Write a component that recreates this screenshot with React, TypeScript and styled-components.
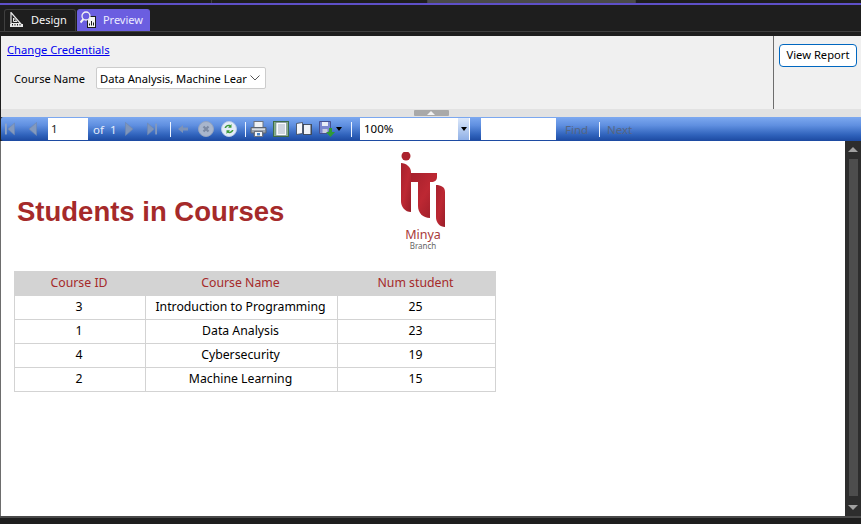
import React from "react"
import styled, { createGlobalStyle } from "styled-components"

const GlobalStyle = createGlobalStyle`
  html, body {
    margin: 0;
    padding: 0;
    height: 100%;
    background: #1e1e1e;
    overflow: hidden;
  }
  body, input, select, button {
    font-family: "Noto Sans", "Open Sans", sans-serif;
  }
`

const rows = [
  { id: 3, name: "Introduction to Programming", num: 25 },
  { id: 1, name: "Data Analysis", num: 23 },
  { id: 4, name: "Cybersecurity", num: 19 },
  { id: 2, name: "Machine Learning", num: 15 },
]

const FirstIcon = () => (
  <svg width="11" height="14" viewBox="0 0 11 14">
    <rect x="0" y="1" width="2" height="12" fill="#8fa3c4" />
    <path d="M10.500 0.500V13.500L3 7Z" fill="#8399bd" stroke="#6f86ad" strokeWidth="0.600" />
  </svg>
)
const PrevIcon = () => (
  <svg width="9" height="14" viewBox="0 0 9 14">
    <path d="M8.500 0.500V13.500L1 7Z" fill="#8399bd" stroke="#6f86ad" strokeWidth="0.600" />
  </svg>
)
const NextIcon = () => (
  <svg width="9" height="14" viewBox="0 0 9 14">
    <path d="M0.500 0.500V13.500L8 7Z" fill="#7f95ba" stroke="#6f86ad" strokeWidth="0.600" />
  </svg>
)
const LastIcon = () => (
  <svg width="11" height="14" viewBox="0 0 11 14">
    <path d="M0.500 0.500V13.500L8 7Z" fill="#7f95ba" stroke="#6f86ad" strokeWidth="0.600" />
    <rect x="9" y="1" width="2" height="12" fill="#8399bd" />
  </svg>
)
const BackIcon = () => (
  <svg width="10" height="10" viewBox="0 0 10 10">
    <path d="M0 5L5 1V3.500H10V6.500H5V9Z" fill="#7d93b8" />
  </svg>
)
const StopIcon = () => (
  <svg width="16" height="16" viewBox="0 0 16 16">
    <circle cx="8" cy="8" r="7.500" fill="#a9b6cc" stroke="#93a3bf" />
    <path d="M5.500 5.500L10.500 10.500M10.500 5.500L5.500 10.500" stroke="#7c8aa3" strokeWidth="2.200" />
  </svg>
)
const RefreshIcon = () => (
  <svg width="16" height="16" viewBox="0 0 16 16">
    <circle cx="8" cy="8" r="7.500" fill="#e4ecf8" stroke="#b9cbe6" />
    <path d="M3.500 7C4 4.500 7 3 9.500 4.200L10.500 3V6.800H7L8.300 5.500C7 5 5.500 5.700 5.200 7Z" fill="#3c9a3a" />
    <path d="M12.500 9C12 11.500 9 13 6.500 11.800L5.500 13V9.200H9L7.700 10.500C9 11 10.500 10.300 10.800 9Z" fill="#3c9a3a" />
  </svg>
)
const PrintIcon = () => (
  <svg width="17" height="16" viewBox="0 0 17 16">
    <rect x="4" y="0.500" width="9" height="6" fill="#eef1f5" stroke="#6d7480" />
    <path d="M1 6.500H16V12H13V15H4V12H1Z" fill="#9aa3ae" stroke="#5c6470" />
    <rect x="2" y="7.500" width="13" height="1.500" fill="#d7dce2" />
    <rect x="4.500" y="10.500" width="8" height="5" fill="#f6f8fb" stroke="#6d7480" />
    <rect x="7" y="12" width="3" height="2.500" fill="#4a86c8" />
  </svg>
)
const PageIcon = () => (
  <svg width="16" height="16" viewBox="0 0 16 16">
    <rect x="0.500" y="0.500" width="15" height="15" fill="#86b088" stroke="#3f6a48" />
    <rect x="3" y="1.500" width="10.500" height="13" fill="#fafbfd" stroke="#5e6f86" strokeWidth="0.500" />
    <path d="M5 4H12M5 6H12M5 8H12M5 10H12M5 12H12" stroke="#8090a8" strokeWidth="0.700" />
  </svg>
)
const BookIcon = () => (
  <svg width="16" height="14" viewBox="0 0 16 14">
    <path d="M0.500 1.500L6.500 0.500V11.500L0.500 12.500Z" fill="#f5f7fb" stroke="#3a4250" strokeWidth="0.800" />
    <rect x="7.500" y="2.500" width="8" height="10" fill="#eef2f8" stroke="#2f3744" strokeWidth="0.800" />
    <rect x="14.500" y="3" width="1" height="9.500" fill="#3a4250" />
  </svg>
)
const SaveIcon = () => (
  <svg width="16" height="16" viewBox="0 0 16 16">
    <path d="M0.500 0.500H11.500V9L8 12.500H0.500Z" fill="#7b87cf" stroke="#47508f" />
    <rect x="3" y="1" width="6" height="4" fill="#e9edf7" />
    <rect x="3.500" y="8" width="5" height="4" fill="#c7cce0" />
    <path d="M10 7H13V11H16L11.500 16L7 11H10Z" fill="#2f9a36" />
  </svg>
)
const Caret = () => (
  <svg width="6" height="4" viewBox="0 0 6 4">
    <path d="M0 0H6L3 4Z" fill="#000" />
  </svg>
)
const ScrollArrow = ({ up }: { up?: boolean }) => (
  <svg width="10" height="5" viewBox="0 0 10 5">
    <path d={up ? "M0 5H10L5 0Z" : "M0 0H10L5 5Z"} fill="#a0a0a0" />
  </svg>
)

const DesignIcon = () => (
  <svg width="13" height="15" viewBox="0 0 13 15" fill="none">
    <path d="M1 0.500V11.500L10.500 11.500Z" stroke="#e8e8e8" strokeWidth="1.200" />
    <path d="M3.500 6V9.500H7Z" stroke="#e8e8e8" />
    <rect x="0" y="12" width="13" height="3" fill="#e8e8e8" />
    <path d="M2.500 12V13.500M5 12V13.500M7.500 12V13.500M10 12V13.500" stroke="#1e1e1e" />
  </svg>
)
const PreviewIcon = () => (
  <svg width="16" height="17" viewBox="0 0 16 17" fill="none">
    <rect x="7.500" y="5.500" width="8" height="11" fill="#f3f3f3" stroke="#1b1b1b" />
    <path d="M9.500 14.500V12.500M11.500 14.500V10M13.500 14.500V11.500" stroke="#1b1b1b" />
    <circle cx="6" cy="5" r="4" fill="#6a5ee0" stroke="#f3f3f3" strokeWidth="1.300" />
    <path d="M3.500 8L0.500 11.500" stroke="#f3f3f3" strokeWidth="2" />
  </svg>
)

const ItiLogo = () => (
  <svg width="48" height="76" viewBox="0 0 48 76">
    <defs>
      <linearGradient id="iti" x1="0" y1="0" x2="1" y2="1">
        <stop offset="0" stopColor="#a5202c" />
        <stop offset="0.500" stopColor="#bd2833" />
        <stop offset="1" stopColor="#981d28" />
      </linearGradient>
    </defs>
    <circle cx="7" cy="4" r="4.500" fill="#ac232e" />
    <path d="M2 11C7 11 12 15 12 20V60C6 60 2 55 2 49Z" fill="url(#iti)" />
    <path d="M12 21H38V25C38 28 36 30 32 30H31V66C24 66 19 61 19 54V30H12Z" fill="url(#iti)" />
    <circle cx="42" cy="25" r="3.500" fill="#ffffff" />
    <path d="M37 33C42 33 46 35 46 40V75C41 75 37 71 37 65Z" fill="url(#iti)" />
  </svg>
)

export default function App() {
  return (
    <S.Window>
      <GlobalStyle />
      <S.TopStrip>
        <S.TopSegment $w={212} />
        <S.TopSegment $w={216} />
        <S.TopSegment $w={208} $light />
      </S.TopStrip>
      <S.TabBar>
        <S.Tab>
          <DesignIcon />
          Design
        </S.Tab>
        <S.Tab $active>
          <PreviewIcon />
          Preview
        </S.Tab>
      </S.TabBar>
      <S.TabLine />

      <S.ParamPanel>
        <S.ParamLeft>
          <S.CredLink href="#">Change Credentials</S.CredLink>
          <S.ParamRow>
            <S.ParamLabel>Course Name</S.ParamLabel>
            <S.ParamSelect>
              <S.ParamValue>Data Analysis, Machine Learning</S.ParamValue>
              <svg width="10" height="6" viewBox="0 0 10 6" fill="none">
                <path d="M0.500 0.500L5 5L9.500 0.500" stroke="#555" />
              </svg>
            </S.ParamSelect>
          </S.ParamRow>
        </S.ParamLeft>
        <S.ParamRight>
          <S.ViewButton>View Report</S.ViewButton>
        </S.ParamRight>
      </S.ParamPanel>

      <S.Splitter>
        <S.SplitHandle>
          <svg width="8" height="4" viewBox="0 0 8 4">
            <path d="M0 4H8L4 0Z" fill="#f2f2f2" />
          </svg>
        </S.SplitHandle>
      </S.Splitter>

      <S.Toolbar>
        <S.Slot $w={10} $ml={4}><FirstIcon /></S.Slot>
        <S.Slot $w={9} $ml={13}><PrevIcon /></S.Slot>
        <S.PageInput>1</S.PageInput>
        <S.PageText $w={10} $ml={5}>of</S.PageText>
        <S.PageText $w={6} $ml={7}>1</S.PageText>
        <S.Slot $w={9} $ml={9}><NextIcon /></S.Slot>
        <S.Slot $w={10} $ml={13}><LastIcon /></S.Slot>
        <S.ToolSep $ml={13} />
        <S.Slot $w={10} $ml={7}><BackIcon /></S.Slot>
        <S.Slot $w={16} $ml={10}><StopIcon /></S.Slot>
        <S.Slot $w={16} $ml={7}><RefreshIcon /></S.Slot>
        <S.ToolSep $ml={8} />
        <S.Slot $w={17} $ml={4}><PrintIcon /></S.Slot>
        <S.Slot $w={16} $ml={6}><PageIcon /></S.Slot>
        <S.Slot $w={16} $ml={7}><BookIcon /></S.Slot>
        <S.Slot $w={16} $ml={7}><SaveIcon /></S.Slot>
        <S.Slot $w={6} $ml={1}><Caret /></S.Slot>
        <S.ToolSep $ml={9} />
        <S.ZoomBox>
          <S.ZoomValue>100%</S.ZoomValue>
          <S.ZoomArrow><Caret /></S.ZoomArrow>
        </S.ZoomBox>
        <S.FindInput />
        <S.FindText $ml={9}>Find</S.FindText>
        <S.ToolSep $ml={10} />
        <S.FindText $ml={7}>Next</S.FindText>
      </S.Toolbar>

      <S.ReportRow>
        <S.Report>
          <S.ReportHead>
            <S.Title>Students in Courses</S.Title>
            <S.LogoBox>
              <ItiLogo />
              <S.LogoCity>Minya</S.LogoCity>
              <S.LogoBranch>Branch</S.LogoBranch>
            </S.LogoBox>
          </S.ReportHead>
          <S.Table>
            <colgroup>
              <col width="131" />
              <col width="192" />
              <col width="158" />
            </colgroup>
            <thead>
              <tr>
                <S.Th>Course ID</S.Th>
                <S.Th>Course Name</S.Th>
                <S.Th>Num student</S.Th>
              </tr>
            </thead>
            <tbody>
              {rows.map((r) => (
                <tr key={r.id}>
                  <S.Td>{r.id}</S.Td>
                  <S.Td>{r.name}</S.Td>
                  <S.Td>{r.num}</S.Td>
                </tr>
              ))}
            </tbody>
          </S.Table>
        </S.Report>
        <S.Scrollbar>
          <ScrollArrow up />
          <S.ScrollThumb />
          <ScrollArrow />
        </S.Scrollbar>
      </S.ReportRow>
      <S.BottomBar />
    </S.Window>
  )
}

const S = {
  Window: styled.div`
    display: flex;
    flex-direction: column;
    width: 861px;
    height: 524px;
    background: #1e1e1e;
    overflow: hidden;
  `,
  TopStrip: styled.div`
    display: flex;
    height: 3px;
    flex: none;
    border-bottom: 2px solid #5e50c8;
  `,
  TopSegment: styled.div<{ $w: number; $light?: boolean }>`
    width: ${(p) => p.$w}px;
    box-sizing: border-box;
    background: ${(p) => (p.$light ? "#4a4a4a" : "#1e1e1e")};
    border-right: 1px solid #3f3f3f;
  `,
  TabBar: styled.div`
    display: flex;
    align-items: flex-end;
    height: 26px;
    flex: none;
    padding-left: 4px;
    gap: 1px;
  `,
  Tab: styled.div<{ $active?: boolean }>`
    display: flex;
    align-items: center;
    gap: ${(p) => (p.$active ? 7 : 8)}px;
    height: 22px;
    padding: ${(p) => (p.$active ? "0 6px 3px 2px" : "0 8px 3px 5px")};
    box-sizing: border-box;
    font-size: 11px;
    color: ${(p) => (p.$active ? "#ececff" : "#f6f6f6")};
    background: ${(p) => (p.$active ? "#6b5ee0" : "#1e1e1e")};
    border: 1px solid ${(p) => (p.$active ? "#6b5ee0" : "#3f3f3f")};
    border-bottom: none;
    border-radius: 3px 3px 0 0;
  `,
  TabLine: styled.div`
    height: 5px;
    flex: none;
    border-top: 1px solid #3f3f3f;
    box-sizing: border-box;
  `,
  ParamPanel: styled.div`
    display: flex;
    height: 73px;
    flex: none;
    background: #f0f0f0;
    margin-left: 1px;
  `,
  ParamLeft: styled.div`
    display: flex;
    flex-direction: column;
    width: 773px;
    box-sizing: border-box;
    padding: 6px 0 0 6px;
    border-right: 1px solid #6d6d6d;
  `,
  CredLink: styled.a`
    font-size: 11.2px;
    line-height: 16px;
    color: #0000ee;
    text-decoration: underline;
  `,
  ParamRow: styled.div`
    display: flex;
    align-items: center;
    margin: 9px 0 0 7px;
  `,
  ParamLabel: styled.span`
    width: 82px;
    font-size: 11.1px;
    color: #000;
  `,
  ParamSelect: styled.div`
    display: flex;
    align-items: center;
    justify-content: space-between;
    width: 170px;
    height: 22px;
    box-sizing: border-box;
    padding: 0 5px 0 3px;
    background: #fff;
    border: 1px solid #ccc;
    border-radius: 2px;
    font-size: 11.2px;
  `,
  ParamValue: styled.span`
    width: 147px;
    overflow: hidden;
    white-space: nowrap;
  `,
  ParamRight: styled.div`
    flex: 1;
    padding: 6px 0 0 5px;
  `,
  ViewButton: styled.button`
    width: 78px;
    height: 23px;
    padding: 0 0 2px;
    background: #fff;
    border: 1px solid #0067c0;
    border-radius: 4px;
    font-size: 11.2px;
    color: #000;
  `,
  Splitter: styled.div`
    display: flex;
    justify-content: center;
    height: 8px;
    flex: none;
    margin-left: 1px;
    background: #e2e2e2;
  `,
  SplitHandle: styled.div`
    display: flex;
    align-items: center;
    justify-content: center;
    width: 35px;
    height: 6px;
    margin-top: 1px;
    background: #a9a9a9;
    border-radius: 1px;
  `,
  Toolbar: styled.div`
    display: flex;
    align-items: center;
    height: 24px;
    flex: none;
    margin-left: 1px;
    background: linear-gradient(#7da9f0 0%, #5f8fe0 35%, #2f62bb 75%, #1c49a0 100%);
    border-radius: 2px 0 0 2px;
  `,
  Slot: styled.div<{ $w: number; $ml: number }>`
    display: flex;
    align-items: center;
    justify-content: center;
    flex: none;
    width: ${(p) => p.$w}px;
    margin-left: ${(p) => p.$ml}px;
  `,
  PageInput: styled.div`
    width: 40px;
    height: 22px;
    margin-left: 11px;
    box-sizing: border-box;
    padding: 3px 0 0 3px;
    background: #fff;
    font-size: 11.5px;
    color: #222;
  `,
  PageText: styled.span<{ $w: number; $ml: number }>`
    flex: none;
    width: ${(p) => p.$w}px;
    margin-left: ${(p) => p.$ml}px;
    font-size: 11.5px;
    color: #e6eefb;
  `,
  ToolSep: styled.div<{ $ml: number }>`
    flex: none;
    width: 1px;
    height: 15px;
    margin-left: ${(p) => p.$ml}px;
    background: #eef4ff;
  `,
  ZoomBox: styled.div`
    display: flex;
    justify-content: space-between;
    flex: none;
    width: 110px;
    height: 22px;
    margin-left: 8px;
    background: #fff;
  `,
  ZoomValue: styled.span`
    padding: 3px 0 0 4px;
    font-size: 11.5px;
    color: #000;
  `,
  ZoomArrow: styled.div`
    display: flex;
    align-items: center;
    justify-content: center;
    width: 11px;
    margin-right: 1px;
    background: linear-gradient(#dce8fa, #8fb0e6);
  `,
  FindInput: styled.div`
    flex: none;
    width: 75px;
    height: 22px;
    margin-left: 11px;
    background: #fff;
  `,
  FindText: styled.span<{ $ml: number }>`
    flex: none;
    width: 24px;
    margin-left: ${(p) => p.$ml}px;
    font-size: 11.5px;
    color: #566682;
  `,
  ReportRow: styled.div`
    display: flex;
    height: 375px;
    flex: none;
    border-left: 1px solid #6d6d6d;
  `,
  Report: styled.div`
    width: 844px;
    box-sizing: border-box;
    padding: 11px 0 0 13px;
    background: #fff;
  `,
  ReportHead: styled.div`
    display: grid;
    grid-template-columns: 385px 48px;
    align-items: center;
    height: 119px;
  `,
  Title: styled.h1`
    margin: 0 0 0 3px;
    font-family: "Liberation Sans", Arial, sans-serif;
    font-size: 27.5px;
    font-weight: 700;
    color: #a52a2a;
    white-space: nowrap;
  `,
  LogoBox: styled.div`
    display: flex;
    flex-direction: column;
    align-items: center;
    align-self: start;
  `,
  LogoCity: styled.span`
    font-size: 12.5px;
    line-height: 13px;
    color: #a83a3a;
  `,
  LogoBranch: styled.span`
    font-size: 8px;
    line-height: 9px;
    color: #666;
  `,
  Table: styled.table`
    width: 481px;
    border-collapse: collapse;
    table-layout: fixed;
  `,
  Th: styled.th`
    box-sizing: border-box;
    height: 24px;
    padding: 0 2px 2px 0;
    background: #d3d3d3;
    border: 1px solid #d3d3d3;
    font-size: 12.3px;
    font-weight: 400;
    color: #a52a2a;
  `,
  Td: styled.td`
    box-sizing: border-box;
    height: 24px;
    padding: 0 2px 2px 0;
    border: 1px solid #d3d3d3;
    font-size: 12.25px;
    text-align: center;
    color: #000;
  `,
  Scrollbar: styled.div`
    display: flex;
    flex-direction: column;
    align-items: center;
    flex: 1;
    padding: 6px 0;
    box-sizing: border-box;
    background: #2d2d2d;
  `,
  ScrollThumb: styled.div`
    flex: 1;
    width: 9px;
    margin: 7px 0 9px;
    background: #4d4d4d;
  `,
  BottomBar: styled.div`
    flex: 1;
    border-top: 2px solid #4a4a4a;
  `,
}
